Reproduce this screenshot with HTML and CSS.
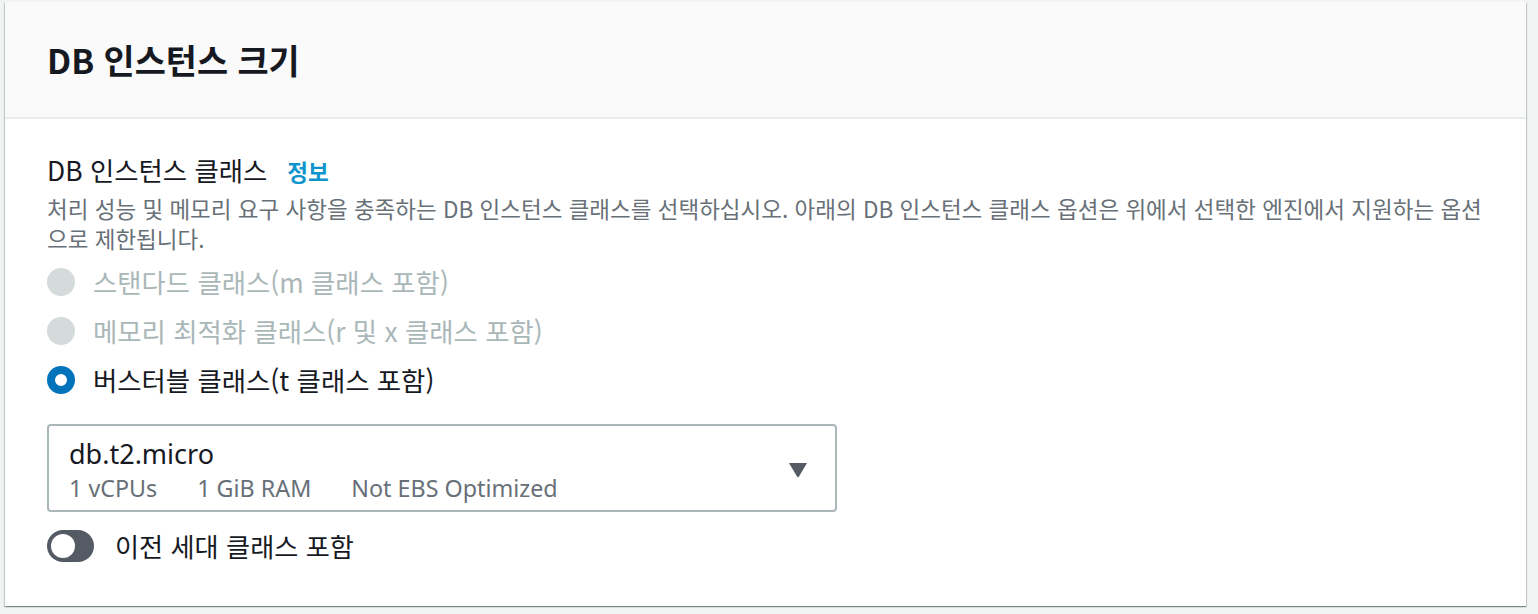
FILE: index.html
```html
<!DOCTYPE html>
<html lang="ko">
<head>
<meta charset="utf-8">
<title>DB 인스턴스 크기</title>
<link rel="stylesheet" href="styles.css">
</head>
<body>
<section class="card">
  <header class="card-header">
    <h2 class="card-title">DB 인스턴스 크기</h2>
  </header>
  <div class="card-body">
    <div class="field-label">
      <span>DB 인스턴스 클래스</span>
      <a class="info-link" href="#">정보</a>
    </div>
    <p class="field-desc">처리 성능 및 메모리 요구 사항을 충족하는 DB 인스턴스 클래스를 선택하십시오. 아래의 DB 인스턴스 클래스 옵션은 위에서 선택한 엔진에서 지원하는 옵션으로 제한됩니다.</p>
    <div class="radio-group">
      <div class="radio disabled"><span class="radio-dot"></span><span class="radio-label">스탠다드 클래스(m 클래스 포함)</span></div>
      <div class="radio disabled"><span class="radio-dot"></span><span class="radio-label">메모리 최적화 클래스(r 및 x 클래스 포함)</span></div>
      <div class="radio checked"><span class="radio-dot"></span><span class="radio-label">버스터블 클래스(t 클래스 포함)</span></div>
    </div>
    <div class="select">
      <div class="select-text">
        <div class="select-value">db.t2.micro</div>
        <div class="select-tags">
          <span>1 vCPUs</span>
          <span>1 GiB RAM</span>
          <span>Not EBS Optimized</span>
        </div>
      </div>
      <svg class="caret" width="20" height="16" viewBox="0 0 20 16"><path d="M1 1 H19 L11 14.5 Q10 16 9 14.5 Z" fill="#545b64"/></svg>
    </div>
    <div class="toggle-row">
      <span class="toggle"><span class="toggle-knob"></span></span>
      <span class="toggle-label">이전 세대 클래스 포함</span>
    </div>
  </div>
</section>
</body>
</html>
```

FILE: styles.css
```css
html, body {
  margin: 0;
  padding: 0;
}
body {
  background: #f2f3f3;
  font-family: "Noto Sans", "Noto Sans CJK KR", sans-serif;
  color: #16191f;
  padding: 2px 12px 8px 5px;
}
.card {
  background: #ffffff;
  width: 1521px;
  box-shadow: 0 1px 1px 0 rgba(0, 28, 36, 0.3), 1px 1px 1px 0 rgba(0, 28, 36, 0.15), -1px 1px 1px 0 rgba(0, 28, 36, 0.15);
}
.card-header {
  background: #fafafa;
  height: 115px;
  border-bottom: 2px solid #eaeded;
  display: flex;
  align-items: center;
  padding: 0 42px;
}
.card-title {
  margin: 0;
  font-size: 33.8px;
  font-weight: 700;
  font-family: "Noto Sans CJK KR", sans-serif;
}
.card-body {
  padding: 33px 42px 44px 42px;
}
.field-label {
  font-size: 26.4px;
  line-height: 36px;
  display: flex;
  align-items: baseline;
  gap: 20px;
  font-family: "Noto Sans CJK KR", sans-serif;
}
.info-link {
  font-size: 22.5px;
  font-weight: 700;
  color: #0f95cd;
  text-decoration: none;
}
.field-desc {
  margin: 4px 0 0 0;
  font-size: 22.5px;
  line-height: 30px;
  color: #687078;
  font-family: "Noto Sans CJK KR", sans-serif;
}
.radio-group {
  margin-top: 4px;
  display: flex;
  flex-direction: column;
}
.radio {
  height: 49px;
  display: flex;
  align-items: center;
  gap: 18px;
}
.radio-dot {
  width: 28px;
  height: 28px;
  border-radius: 50%;
  box-sizing: border-box;
  flex: none;
}
.radio.disabled .radio-dot {
  background: #d5dbdb;
}
.radio.checked .radio-dot {
  background: #ffffff;
  border: 8.5px solid #0073bb;
}
.radio-label {
  font-size: 26.4px;
  font-family: "Noto Sans CJK KR", sans-serif;
}
.radio.disabled .radio-label {
  color: #aab7b8;
}
.select {
  margin-top: 20px;
  width: 790px;
  height: 88px;
  box-sizing: border-box;
  border: 2px solid #aab7b8;
  border-radius: 4px;
  display: flex;
  align-items: center;
  justify-content: space-between;
  padding: 0 27px 0 20px;
}
.select-text {
  padding-top: 6px;
}
.select-value {
  font-size: 27px;
  line-height: 34px;
}
.select-tags {
  display: flex;
  gap: 40px;
  font-size: 23.3px;
  line-height: 34px;
  color: #687078;
}
.caret {
  margin-top: 4px;
}
.toggle-row {
  margin-top: 18px;
  display: flex;
  align-items: center;
  gap: 21px;
  height: 32px;
}
.toggle {
  width: 47px;
  height: 32px;
  border-radius: 16px;
  background: #545b64;
  position: relative;
  flex: none;
}
.toggle-knob {
  position: absolute;
  left: 4px;
  top: 4px;
  width: 24px;
  height: 24px;
  border-radius: 50%;
  background: #ffffff;
}
.toggle-label {
  font-size: 26.2px;
  font-family: "Noto Sans CJK KR", sans-serif;
}
```
